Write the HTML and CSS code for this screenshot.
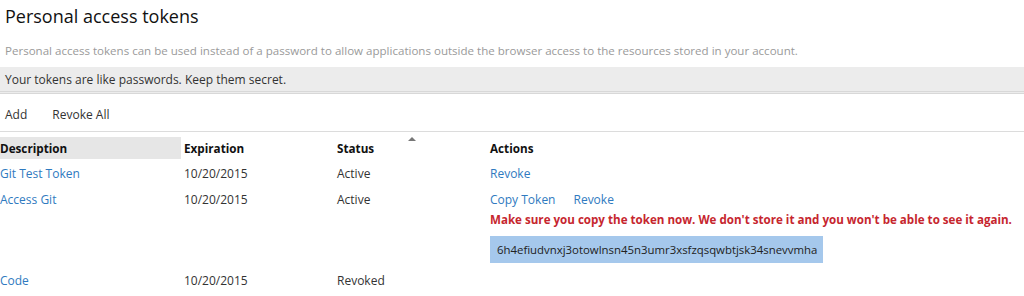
FILE: index.html
```html
<!DOCTYPE html>
<html>
<head>
<meta charset="utf-8">
<link rel="stylesheet" href="styles.css">
</head>
<body>
<div class="page">
  <h1 class="title">Personal access tokens</h1>
  <p class="intro">Personal access tokens can be used instead of a password to allow applications outside the browser access to the resources stored in your account.</p>
  <div class="notice">Your tokens are like passwords. Keep them secret.</div>
  <div class="toolbar">
    <span class="tool">Add</span>
    <span class="tool">Revoke All</span>
  </div>
  <table class="tokens">
    <thead>
      <tr>
        <th class="col-desc sorted">Description</th>
        <th class="col-exp">Expiration</th>
        <th class="col-status">Status<span class="sort-arrow"></span></th>
        <th class="col-actions">Actions</th>
      </tr>
    </thead>
    <tbody>
      <tr>
        <td><a class="link">Git Test Token</a></td>
        <td>10/20/2015</td>
        <td>Active</td>
        <td><a class="link">Revoke</a></td>
      </tr>
      <tr class="new-row">
        <td><a class="link">Access Git</a></td>
        <td>10/20/2015</td>
        <td>Active</td>
        <td>
          <div class="actions"><a class="link">Copy Token</a><a class="link">Revoke</a></div>
          <div class="warning">Make sure you copy the token now. We don't store it and you won't be able to see it again.</div>
          <div class="token">6h4efiudvnxj3otowlnsn45n3umr3xsfzqsqwbtjsk34snevvmha</div>
        </td>
      </tr>
      <tr>
        <td><a class="link">Code</a></td>
        <td>10/20/2015</td>
        <td>Revoked</td>
        <td></td>
      </tr>
    </tbody>
  </table>
</div>
</body>
</html>
```

FILE: styles.css
```css
html, body {
  margin: 0;
  padding: 0;
  background: #ffffff;
}
body {
  font-family: "Open Sans", "Noto Sans", "Liberation Sans", sans-serif;
  font-size: 12px;
  color: #222;
}
.page {
  width: 1024px;
}
.title {
  margin: 0;
  padding: 4px 0 0 5px;
  height: 28px;
  font-size: 18px;
  font-weight: 400;
  line-height: 24px;
  color: #111;
}
.intro {
  margin: 0;
  padding: 10px 0 0 5px;
  height: 25px;
  line-height: 18px;
  color: #9a9a9a;
  font-size: 11.55px;
}
.notice {
  height: 24px;
  line-height: 26px;
  padding-left: 5px;
  background: #ececec;
  border-bottom: 3px double #d8d8d8;
  color: #333;
}
.toolbar {
  display: flex;
  gap: 25px;
  padding: 4px 0 0 5px;
  height: 33px;
  align-items: center;
  border-bottom: 1px solid #dcdcdc;
  margin-bottom: 1px;
}
.tool {
  color: #333;
}
.tokens {
  border-collapse: collapse;
  width: 1024px;
  table-layout: fixed;
}
.tokens th {
  text-align: left;
  font-weight: 700;
  font-size: 11.7px;
  color: #111;
  height: 26px;
  padding: 4px 0 0 0;
  vertical-align: middle;
  box-sizing: border-box;
}
.tokens th.col-desc { width: 184px; }
.tokens th.col-exp { width: 153px; }
.tokens th.col-status { width: 153px; position: relative; }
.tokens th.sorted {
  background: #e6e6e6;
  background-clip: content-box;
  padding-right: 3px;
}
.sort-arrow {
  position: absolute;
  left: 71px;
  top: 4px;
  width: 0;
  height: 0;
  border-left: 4px solid transparent;
  border-right: 4px solid transparent;
  border-bottom: 4px solid #777;
}
.tokens td {
  padding: 0;
  height: 26px;
  vertical-align: top;
  line-height: 26px;
  color: #333;
}
.tokens tbody tr:first-child td {
  padding-top: 2px;
}
.link {
  color: #2f7ac0;
  cursor: pointer;
}
.actions {
  display: flex;
  gap: 18px;
}
.warning {
  color: #c6262e;
  font-weight: 700;
  font-size: 11.6px;
  line-height: 14px;
  white-space: nowrap;
}
.token {
  display: inline-block;
  margin-top: 9px;
  margin-bottom: 5px;
  padding: 0 7px;
  width: 319px;
  height: 27px;
  line-height: 27px;
  font-size: 11.4px;
  background: #a5c8ec;
  color: #222;
}
```
